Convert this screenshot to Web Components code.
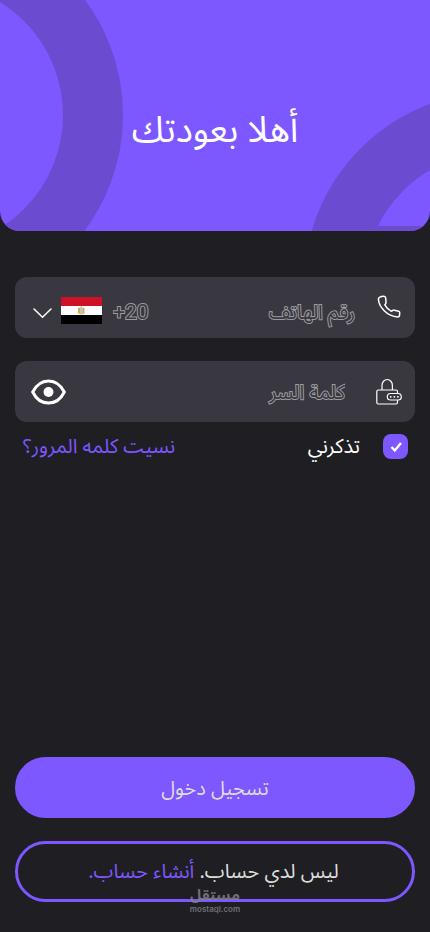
<!DOCTYPE html>
<html lang="ar" dir="rtl">
<head>
<meta charset="utf-8">
<meta name="viewport" content="width=device-width, initial-scale=1">
<title>تسجيل دخول</title>
<style>
  html { background: #1f1e23; }
  body { margin: 0; font-family: "Noto Sans", "Noto Sans Arabic", "DejaVu Sans", sans-serif; font-size: 20px; line-height: 28px; color: #fff;
    --accent: #7d57ff; --field: #393841; --muted: #9c9ba0; }
</style>
</head>
<body>
<login-page></login-page>
<script>
const define = (name, html) => {
  const template = document.createElement('template');
  template.innerHTML = html;
  customElements.define(name, class extends HTMLElement {
    constructor() {
      super();
      this.attachShadow({ mode: 'open' }).append(template.content.cloneNode(true));
    }
  });
};

define('welcome-header', `
  <style>
    :host { display: grid; height: 231px; overflow: hidden; border-radius: 0 0 20px 20px; background: var(--accent); }
    .rings { grid-area: 1 / 1; display: flex; justify-content: space-between; direction: ltr; min-width: 0; }
    svg { display: block; flex: none; }
    h1 { grid-area: 1 / 1; margin: 0; padding-top: 26px; place-self: center; font-size: 36px; line-height: 48px; font-weight: 400; }
  </style>
  <div class="rings" aria-hidden="true">
    <svg width="124" height="231" viewBox="0 0 124 231"><circle cx="-70" cy="115" r="163" fill="none" stroke="#6b4bcf" stroke-width="60"/></svg>
    <svg width="124" height="231" viewBox="306 0 124 231"><circle cx="497" cy="285" r="163" fill="none" stroke="#6b4bcf" stroke-width="60"/><path d="M376 226h54v5h-54z" fill="#6b4bcf"/></svg>
  </div>
  <h1><slot></slot></h1>`);

define('field-box', `
  <style>
    :host { display: flex; align-items: center; height: 61px; box-sizing: border-box; border-radius: 12px; background: var(--field); padding: 0 13px 0 16px; }
    ::slotted(*) { flex: none; }
  </style>
  <slot></slot>`);

const fieldStyles = `
    :host { display: block; }
    svg { display: block; }
    input { flex: 1; min-width: 0; width: 0; border: 0; outline: 0; background: none; color: #fff; font: inherit; height: 40px; }
    input:placeholder-shown { paint-order: stroke fill; -webkit-text-stroke: 2px var(--muted); }
    input::placeholder { color: var(--field); opacity: 1; }`;

define('phone-field', `
  <style>${fieldStyles}
    input { padding: 8px 21px 0 0; }
    label { margin-bottom: 2px; }
    .country { display: flex; align-items: center; direction: ltr; padding-top: 6px; gap: 8px; }
    .chevron { margin: 4px 0 0 1px; }
    select { appearance: none; border: 0; outline: 0; background: none; padding: 2px 0 0; margin-left: 3px; font: 400 21px/28px Roboto, sans-serif; color: var(--field); paint-order: stroke fill; -webkit-text-stroke: 2px var(--muted); }
    option { color: #000; }
  </style>
  <field-box>
    <label for="phone" aria-label="رقم الهاتف"><svg width="26" height="26" viewBox="0 0 26 26" fill="none" stroke="#fff" stroke-width="1.5" stroke-linejoin="round"><path d="M3.500 3.400Q6 2 8.500 2.400Q9.600 2.600 9.700 4L10 8.500Q10.100 9.500 9.200 10.400L8.800 10.800Q11 15 15.500 17.300L16.800 16.400Q17.600 15.900 18.500 16.200L22.600 17.200Q23.700 17.500 23.700 18.600L23.500 21.600Q23.300 23 21.800 23Q14 22.600 8.200 16.800Q2.600 11 2.400 5Q2.400 4 3.500 3.400Z"/></svg></label>
    <input id="phone" type="tel" dir="rtl" placeholder="رقم الهاتف">
    <span class="country">
      <svg class="chevron" width="21" height="14" viewBox="1 0 21 14" fill="none" stroke="#fff" stroke-width="1.500" stroke-linecap="round"><path d="M3 3L11.500 11.200L20 3"/></svg>
      <svg width="41" height="27" viewBox="0 0 41 27" aria-hidden="true"><path fill="#ce1126" d="M0 0h41v9H0z"/><path fill="#fff" d="M0 9h41v9H0z"/><path fill="#000" d="M0 18h41v9H0z"/><path fill="#d2ad4d" d="M17 10.5l2.2.6v5.4H17zM23.5 10.5l-2.2.6v5.4h2.2z"/><path fill="#c6c1b5" d="M19.3 10l1-.9 1 .9.3 6.800h-2.600zM18 16.500h5l-.6 1h-3.800z"/></svg>
      <select aria-label="رمز الدولة"><option>+20</option></select>
    </span>
  </field-box>`);

define('password-field', `
  <style>${fieldStyles}
    input { padding: 0 30px 0 0; }
    button { border: 0; padding: 0; background: none; }
  </style>
  <field-box>
    <label for="password" aria-label="كلمة السر"><svg width="27" height="28" viewBox="0 0 27 28" fill="none" stroke="#fff" stroke-width="1.2" stroke-linecap="round"><path d="M7 12V7.500a5.200 6 0 0 1 10.400 0V12M22.500 15.500v-2a1.500 1.500 0 0 0-1.500-1.500H3.300a1.500 1.500 0 0 0-1.500 1.500v11a1.500 1.500 0 0 0 1.500 1.500H21a1.500 1.500 0 0 0 1.500-1.500V22.500"/><rect x="12.300" y="15.500" width="14" height="6.500" rx="3.250"/><path d="M15.700 18.800h.1M19.300 18.800h.1M22.900 18.800h.1" stroke-width="1.800"/></svg></label>
    <input id="password" type="password" placeholder="كلمة السر">
    <button type="button" aria-label="إظهار كلمة السر"><svg width="35" height="26" viewBox="0 0 35 26"><path d="M1.700 13C9 -1.800 26 -1.800 33.300 13C26 27.800 9 27.800 1.700 13Z" fill="none" stroke="#fff" stroke-width="3"/><circle cx="17.500" cy="13" r="5" fill="#fff"/></svg></button>
  </field-box>`);

define('remember-check', `
  <style>
    :host { display: block; }
    label { display: flex; align-items: center; gap: 23px; }
    input { appearance: none; display: grid; place-items: center; width: 25px; height: 25px; margin: 0; border-radius: 8px; background: var(--field); }
    input:checked { background: var(--accent) url("data:image/svg+xml,%3Csvg xmlns='http://www.w3.org/2000/svg' viewBox='0 0 25 25'%3E%3Cpath d='M8.500 13l3.300 3.500L18 9' fill='none' stroke='white' stroke-width='2.400'/%3E%3C/svg%3E"); }
  </style>
  <label><input type="checkbox" checked><slot></slot></label>`);

define('text-link', `
  <style>
    :host { display: inline; }
    a { color: var(--accent); text-decoration: none; }
  </style>
  <a href="#"><slot></slot></a>`);

define('pill-button', `
  <style>
    :host { display: block; }
    button { display: block; width: 100%; height: 61px; border: 3px solid var(--accent); border-radius: 31px; padding: 0; background: var(--accent); color: #ddd; font: inherit; }
    :host([outlined]) button { background: none; padding: 0 3px 2px 0; }
    ::slotted(strong) { font-weight: 400; color: var(--accent); }
  </style>
  <button type="button"><slot></slot></button>`);

define('brand-mark', `
  <style>
    :host { display: grid; justify-items: center; color: #85848a; opacity: .8; pointer-events: none; }
    b { font-size: 15px; line-height: 18px; font-weight: 700; }
    span { font: 600 8px/12px Inter, sans-serif; }
  </style>
  <b>مستقل</b><span dir="ltr">mostaql.com</span>`);

define('login-page', `
  <style>
    :host { display: flex; flex-direction: column; min-height: 100vh; position: relative; }
    main { flex: 1; display: flex; flex-direction: column; padding: 46px 15px 30px; }
    form { display: grid; gap: 23px; }
    .options { display: flex; justify-content: space-between; align-items: center; padding: 0 7px 0 8px; margin-top: -13px; }
    .actions { display: grid; gap: 23px; margin-top: auto; }
    brand-mark { position: absolute; inset: auto 0 17px; }
  </style>
  <welcome-header>أهلا بعودتك</welcome-header>
  <main>
    <form>
      <phone-field></phone-field>
      <password-field></password-field>
      <div class="options">
        <remember-check>تذكرني</remember-check>
        <text-link>نسيت كلمه المرور؟</text-link>
      </div>
    </form>
    <div class="actions">
      <pill-button>تسجيل دخول</pill-button>
      <pill-button outlined>ليس لدي حساب. <strong>أنشاء حساب.</strong></pill-button>
    </div>
  </main>
  <brand-mark></brand-mark>`);
</script>
</body>
</html>
